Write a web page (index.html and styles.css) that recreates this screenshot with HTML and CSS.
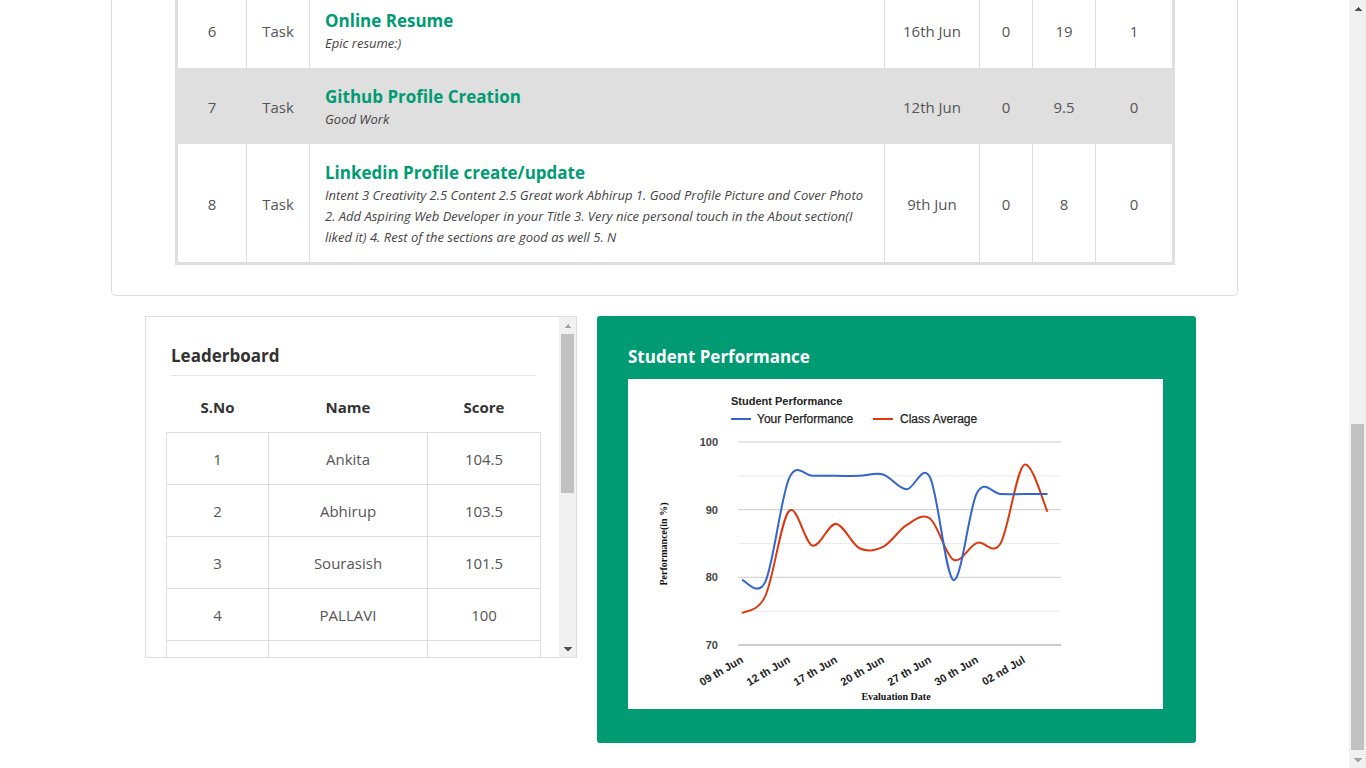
FILE: index.html
```html
<!DOCTYPE html>
<html lang="en">
<head>
<meta charset="utf-8">
<title>Student Dashboard</title>
<link rel="stylesheet" href="styles.css">
</head>
<body>
<div class="page">
  <div class="main">
    <section class="tasks-panel">
      <table class="tasks">
        <colgroup>
          <col class="c-no"><col class="c-type"><col class="c-title"><col class="c-date"><col class="c-a"><col class="c-b"><col class="c-c">
        </colgroup>
        <tbody>
          <tr>
            <td>6</td><td>Task</td>
            <td class="t"><div class="t-name">Online Resume</div><div class="t-desc">Epic resume:)</div></td>
            <td>16th Jun</td><td>0</td><td>19</td><td>1</td>
          </tr>
          <tr class="hl">
            <td>7</td><td>Task</td>
            <td class="t"><div class="t-name">Github Profile Creation</div><div class="t-desc">Good Work</div></td>
            <td>12th Jun</td><td>0</td><td>9.5</td><td>0</td>
          </tr>
          <tr>
            <td>8</td><td>Task</td>
            <td class="t"><div class="t-name">Linkedin Profile create/update</div><div class="t-desc">Intent 3 Creativity 2.5 Content 2.5 Great work Abhirup 1. Good Profile Picture and Cover Photo 2. Add Aspiring Web Developer in your Title 3. Very nice personal touch in the About section(I liked it) 4. Rest of the sections are good as well 5. N</div></td>
            <td>9th Jun</td><td>0</td><td>8</td><td>0</td>
          </tr>
        </tbody>
      </table>
    </section>

    <div class="bottom">
      <div class="leaderboard">
        <div class="lb-body">
          <h3 class="lb-title">Leaderboard</h3>
          <hr class="lb-rule">
          <table class="lb-table">
            <colgroup><col class="l1"><col class="l2"><col class="l3"></colgroup>
            <thead>
              <tr><th>S.No</th><th>Name</th><th>Score</th></tr>
            </thead>
            <tbody>
              <tr><td>1</td><td>Ankita</td><td>104.5</td></tr>
              <tr><td>2</td><td>Abhirup</td><td>103.5</td></tr>
              <tr><td>3</td><td>Sourasish</td><td>101.5</td></tr>
              <tr><td>4</td><td>PALLAVI</td><td>100</td></tr>
              <tr><td></td><td></td><td></td></tr>
            </tbody>
          </table>
        </div>
        <div class="lb-sb">
          <div class="sb-btn up-off"></div>
          <div class="lb-track"><div class="lb-thumb"></div></div>
          <div class="sb-btn down-on"></div>
        </div>
      </div>

      <div class="perf">
        <h3 class="perf-title">Student Performance</h3>
        <svg class="chart" viewBox="0 0 535 330" width="535" height="330">
          <text class="c-title" x="103" y="26">Student Performance</text>
          <line x1="103" y1="40" x2="123" y2="40" stroke="#3366cc" stroke-width="2"/>
          <text class="c-legend" x="129" y="44">Your Performance</text>
          <line x1="245" y1="40" x2="265" y2="40" stroke="#dc3912" stroke-width="2"/>
          <text class="c-legend" x="272" y="44">Class Average</text>

          <line class="g-major" x1="110" x2="433" y1="63" y2="63"/>
          <line class="g-minor" x1="110" x2="433" y1="96.8" y2="96.8"/>
          <line class="g-major" x1="110" x2="433" y1="130.7" y2="130.7"/>
          <line class="g-minor" x1="110" x2="433" y1="164.5" y2="164.5"/>
          <line class="g-major" x1="110" x2="433" y1="198.3" y2="198.3"/>
          <line class="g-minor" x1="110" x2="433" y1="232.2" y2="232.2"/>
          <line class="g-base" x1="110" x2="433" y1="266" y2="266"/>

          <text class="c-ylab" x="90" y="67">100</text>
          <text class="c-ylab" x="90" y="134.7">90</text>
          <text class="c-ylab" x="90" y="202.3">80</text>
          <text class="c-ylab" x="90" y="270">70</text>

          <text class="c-xlab" x="116" y="283" transform="rotate(-30 116 283)">09 th Jun</text>
          <text class="c-xlab" x="163" y="283" transform="rotate(-30 163 283)">12 th Jun</text>
          <text class="c-xlab" x="210" y="283" transform="rotate(-30 210 283)">17 th Jun</text>
          <text class="c-xlab" x="257" y="283" transform="rotate(-30 257 283)">20 th Jun</text>
          <text class="c-xlab" x="304" y="283" transform="rotate(-30 304 283)">27 th Jun</text>
          <text class="c-xlab" x="351" y="283" transform="rotate(-30 351 283)">30 th Jun</text>
          <text class="c-xlab" x="398" y="283" transform="rotate(-30 398 283)">02 nd Jul</text>

          <text class="c-axis" x="39" y="165" text-anchor="middle" transform="rotate(-90 39 165)">Performance(in %)</text>
          <text class="c-axis" x="268" y="321" text-anchor="middle">Evaluation Date</text>

          <path id="line-class" class="series red" d=""/>
          <path id="line-you" class="series blue" d=""/>
        </svg>
      </div>
    </div>
  </div>

  <div class="page-sb">
    <div class="sb-btn up-on"></div>
    <div class="sb-track"><div class="sb-thumb"></div></div>
    <div class="sb-btn down-off"></div>
  </div>
</div>
<script src="chart.js"></script>
</body>
</html>
```

FILE: styles.css
```css
* { box-sizing: border-box; }

html, body {
  margin: 0;
  height: 100%;
}

body {
  font-family: "Open Sans", "Liberation Sans", sans-serif;
  color: #555;
  background: #fff;
  overflow: hidden;
}

.page {
  display: flex;
  height: 768px;
}

.main {
  flex: 1;
  min-width: 0;
  overflow: hidden;
}

/* ---------- tasks panel ---------- */
.tasks-panel {
  width: 1127px;
  margin: 0 auto;
  border: 1px solid #ddd;
  border-top: 0;
  border-radius: 0 0 5px 5px;
  padding: 0 62px 30px 63px;
}

.tasks {
  width: 1000px;
  margin-top: -8px;
  border: 3px solid #dedede;
  border-top: 0;
  border-spacing: 0;
  border-collapse: separate;
  table-layout: fixed;
}

.tasks .c-no { width: 69px; }
.tasks .c-type { width: 63px; }
.tasks .c-title { width: 575px; }
.tasks .c-date { width: 95px; }
.tasks .c-a { width: 53px; }
.tasks .c-b { width: 63px; }
.tasks .c-c { width: 76px; }

.tasks td {
  border-right: 1px solid #dedede;
  text-align: center;
  vertical-align: middle;
  font-size: 15px;
  padding: 2px 6px 0;
  color: #555;
}

.tasks td:last-child { border-right: 0; }

.tasks tr.hl td { background: #dfdfdf; }

.tasks td.t {
  text-align: left;
  padding: 16px 15px 14px 15px;
}

.t-name {
  font-size: 17px;
  font-weight: 700;
  line-height: 25px;
  color: #009b72;
}

.t-desc {
  font-size: 13px;
  font-style: italic;
  line-height: 21px;
  color: #444;
}

/* ---------- bottom row ---------- */
.bottom {
  display: flex;
  align-items: flex-start;
  gap: 20px;
  margin: 20px 0 0 145px;
}

.leaderboard {
  width: 432px;
  height: 342px;
  border: 1px solid #ddd;
  display: flex;
}

.lb-body {
  flex: 1;
  min-width: 0;
  overflow: hidden;
  padding: 26px 19px 0 20px;
}

.lb-sb {
  width: 17px;
  flex: none;
  background: #f1f1f1;
  display: flex;
  flex-direction: column;
}

.lb-track {
  flex: 1;
}

.lb-thumb {
  height: 159px;
  margin: 0 2px;
  background: #c1c1c1;
}

.lb-title {
  margin: 0 5px;
  font-size: 17px;
  font-weight: 700;
  line-height: 25px;
  color: #333;
}

.lb-rule {
  margin: 7px 5px 6px;
  border: 0;
  border-top: 1px solid #e5e5e5;
  height: 0;
}

.lb-table {
  width: 100%;
  border-collapse: collapse;
  table-layout: fixed;
  font-size: 15px;
}

.lb-table .l1 { width: 102px; }
.lb-table .l2 { width: 159px; }
.lb-table .l3 { width: 113px; }

.lb-table th {
  height: 50px;
  padding: 0;
  font-weight: 700;
  color: #333;
  text-align: center;
  vertical-align: middle;
}

.lb-table td {
  border: 1px solid #ddd;
  padding: 16px 8px 14px;
  line-height: 21px;
  height: 52px;
  text-align: center;
  color: #555;
}

/* ---------- performance card ---------- */
.perf {
  width: 599px;
  background: #009b72;
  border-radius: 3px;
  padding: 28px 33px 34px 31px;
}

.perf-title {
  margin: 0 0 10px;
  font-size: 17px;
  font-weight: 700;
  line-height: 25px;
  color: #fff;
}

.chart {
  display: block;
  width: 535px;
  height: 330px;
  background: #fff;
}

.chart text {
  font-family: "Liberation Sans", Arial, sans-serif;
}

.chart .c-title {
  font-size: 11px;
  font-weight: 700;
  fill: #222;
}

.chart .c-legend {
  font-size: 12px;
  fill: #222;
  stroke: #222;
  stroke-width: 0.25;
}

.chart .c-ylab {
  font-size: 11px;
  font-weight: 700;
  fill: #444;
  text-anchor: end;
}

.chart .c-xlab {
  font-size: 11px;
  font-weight: 700;
  fill: #222;
  text-anchor: end;
}

.chart .c-axis {
  font-family: "Liberation Serif", "Times New Roman", serif;
  font-size: 10px;
  font-weight: 700;
  fill: #111;
}

.chart .g-major { stroke: #ccc; stroke-width: 1; }
.chart .g-minor { stroke: #ebebeb; stroke-width: 1; }
.chart .g-base { stroke: #999; stroke-width: 1; }

.chart .series {
  fill: none;
  stroke-width: 2;
  stroke-linejoin: round;
}
.chart .blue { stroke: #3366cc; }
.chart .red { stroke: #dc3912; }

/* ---------- scrollbars (page + leaderboard) ---------- */
.sb-btn {
  height: 17px;
  flex: none;
  background-repeat: no-repeat;
  background-position: center;
  background-size: 8px 4px;
}

.up-on {
  background-image: conic-gradient(from 135deg at 50% 0, #505050 90deg, transparent 0);
}

.up-off {
  background-image: conic-gradient(from 135deg at 50% 0, #a3a3a3 90deg, transparent 0);
}

.down-on {
  background-image: conic-gradient(from -45deg at 50% 100%, #505050 90deg, transparent 0);
}

.down-off {
  background-image: conic-gradient(from -45deg at 50% 100%, #a3a3a3 90deg, transparent 0);
}

.page-sb {
  width: 17px;
  flex: none;
  background: #f1f1f1;
  display: flex;
  flex-direction: column;
}

.sb-track {
  flex: 1;
  padding-top: 407px;
}

.sb-thumb {
  height: 326px;
  margin: 0 2px;
  background: #c1c1c1;
}
```

FILE: chart.js
```js
(function () {
  var you = [79.6, 79.4, 94.6, 95, 95, 95, 95.2, 93, 94.8, 79.6, 92.5, 92.3, 92.3, 92.3];
  var avg = [74.7, 77.3, 89.8, 84.7, 87.9, 84.3, 84.5, 87.7, 88.7, 82.6, 85.1, 85, 96.6, 89.7];

  function yOf(v) { return 63 + (100 - v) * 203 / 30; }

  function build(data) {
    var pts = data.map(function (v, i) { return [114 + 23.5 * i, yOf(v)]; });
    var n = pts.length;
    var d = 'M' + pts[0][0].toFixed(2) + ' ' + pts[0][1].toFixed(2);
    for (var i = 0; i < n - 1; i++) {
      var p0 = pts[Math.max(i - 1, 0)];
      var p1 = pts[i];
      var p2 = pts[i + 1];
      var p3 = pts[Math.min(i + 2, n - 1)];
      var c1x = p1[0] + (p2[0] - p0[0]) / 6;
      var c1y = p1[1] + (p2[1] - p0[1]) / 6;
      var c2x = p2[0] - (p3[0] - p1[0]) / 6;
      var c2y = p2[1] - (p3[1] - p1[1]) / 6;
      d += ' C' + c1x.toFixed(2) + ' ' + c1y.toFixed(2) + ' ' +
           c2x.toFixed(2) + ' ' + c2y.toFixed(2) + ' ' +
           p2[0].toFixed(2) + ' ' + p2[1].toFixed(2);
    }
    return d;
  }

  document.getElementById('line-you').setAttribute('d', build(you));
  document.getElementById('line-class').setAttribute('d', build(avg));
})();
```
